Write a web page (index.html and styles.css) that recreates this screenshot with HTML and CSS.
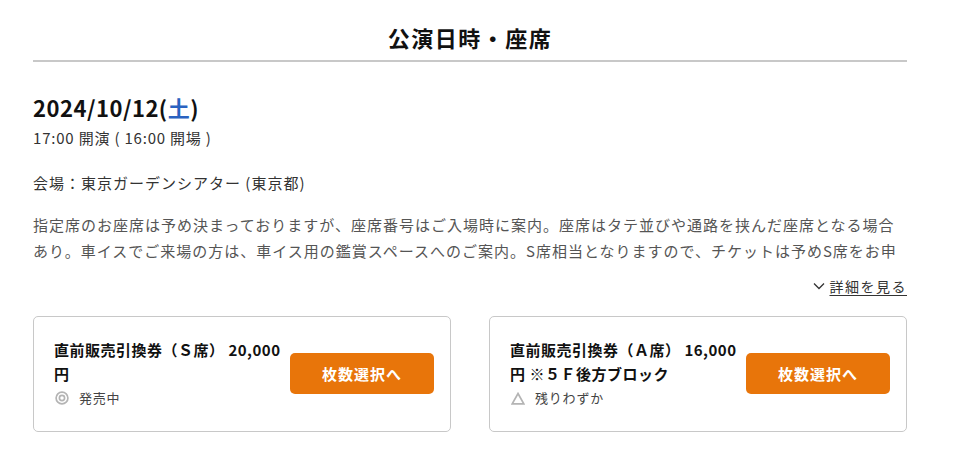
FILE: index.html
```html
<!DOCTYPE html>
<html lang="ja">
<head>
<meta charset="utf-8">
<link rel="stylesheet" href="styles.css">
</head>
<body>
<main class="page">
  <h1 class="section-title">公演日時・座席</h1>
  <div class="date">2024/10/12(<span class="sat">土</span>)</div>
  <div class="time">17:00 開演 ( 16:00 開場 )</div>
  <div class="venue">会場：東京ガーデンシアター (東京都)</div>
  <p class="desc">指定席のお座席は予め決まっておりますが、座席番号はご入場時に案内。座席はタテ並びや通路を挟んだ座席となる場合あり。車イスでご来場の方は、車イス用の鑑賞スペースへのご案内。S席相当となりますので、チケットは予めS席をお申し込みください。</p>
  <div class="more-row">
    <a class="more" href="#"><svg class="chev" width="12" height="8" viewBox="0 0 12 8"><path d="M1 1.5 L6 6.5 L11 1.5" fill="none" stroke="#333" stroke-width="1.3"/></svg><span>詳細を見る</span></a>
  </div>
  <div class="cards">
    <div class="card">
      <div class="info">
        <div class="name">直前販売引換券（Ｓ席） 20,000円</div>
        <div class="status"><svg width="14" height="14" viewBox="0 0 14 14"><circle cx="7" cy="7" r="5.9" fill="none" stroke="#b4b4b4" stroke-width="1.7"/><circle cx="7" cy="7" r="2.6" fill="none" stroke="#b4b4b4" stroke-width="1.7"/></svg><span>発売中</span></div>
      </div>
      <button class="btn">枚数選択へ</button>
    </div>
    <div class="card">
      <div class="info">
        <div class="name">直前販売引換券（Ａ席） 16,000円 ※５Ｆ後方ブロック</div>
        <div class="status"><svg width="14" height="13" viewBox="0 0 14 13"><path d="M7 1.5 L12.8 11.8 H1.2 Z" fill="none" stroke="#b4b4b4" stroke-width="1.7" stroke-linejoin="miter"/></svg><span>残りわずか</span></div>
      </div>
      <button class="btn">枚数選択へ</button>
    </div>
  </div>
</main>
</body>
</html>
```
FILE: styles.css
```css
* { box-sizing: border-box; }
body {
  margin: 0;
  background: #fff;
  font-family: "Noto Sans CJK JP", "Noto Sans", sans-serif;
  color: #222;
}
.page {
  width: 874px;
  margin-left: 33px;
  padding-top: 21px;
}
.section-title {
  margin: 0;
  font-size: 22px;
  font-weight: 700;
  text-align: center;
  line-height: 32px;
  padding-bottom: 7px;
  border-bottom: 2px solid #c8c8c8;
  color: #111;
  letter-spacing: 1.5px;
}
.date {
  margin-top: 30px;
  font-size: 22px;
  font-weight: 700;
  line-height: 30px;
  color: #111;
  letter-spacing: 0.5px;
}
.sat { color: #2a62c0; }
.time {
  margin-top: 4px;
  font-size: 15px;
  line-height: 24px;
  color: #333;
  letter-spacing: 0.8px;
}
.venue {
  margin-top: 21px;
  font-size: 15px;
  line-height: 24px;
  color: #333;
  letter-spacing: 1px;
}
.desc {
  margin: 17px 0 0;
  font-size: 15px;
  line-height: 26px;
  height: 52px;
  overflow: hidden;
  color: #555;
  letter-spacing: 1px;
}
.more-row {
  display: flex;
  justify-content: flex-end;
  margin-top: 11px;
}
.more {
  display: flex;
  align-items: center;
  gap: 5px;
  font-size: 14px;
  line-height: 22px;
  color: #333;
  text-decoration: none;
}
.more span {
  text-decoration: underline;
  text-underline-offset: 3px;
  letter-spacing: 1.5px;
}
.cards {
  display: flex;
  gap: 38px;
  margin-top: 19px;
}
.card {
  flex: 1;
  display: flex;
  align-items: center;
  gap: 2px;
  border: 1px solid #c8c8c8;
  border-radius: 5px;
  padding: 21px 16px 21px 20px;
}
.info { flex: 1; min-width: 0; }
.name {
  font-size: 15px;
  font-weight: 700;
  line-height: 24px;
  color: #111;
  letter-spacing: 0.5px;
}
.status {
  display: flex;
  align-items: center;
  gap: 10px;
  font-size: 13px;
  line-height: 24px;
  color: #444;
  letter-spacing: 0.8px;
}
.status svg { margin-left: 1px; }
.btn {
  flex: 0 0 144px;
  height: 41px;
  border: none;
  border-radius: 5px;
  background: #e8750a;
  color: #fff;
  font-family: inherit;
  font-size: 15px;
  font-weight: 700;
  letter-spacing: 1px;
  margin-top: -2px;
}
```
